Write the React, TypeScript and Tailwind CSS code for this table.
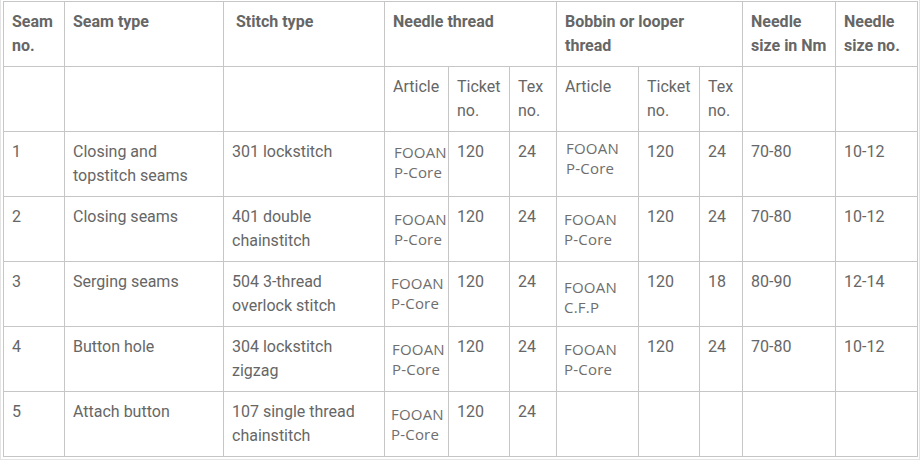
import React from "react";

type Art = { l1: string; l2: string; cls: string } | null;
type Row = {
  no: string;
  seam: string[];
  stitch: string[];
  nA: Art;
  nT: string;
  nX: string;
  bA: Art;
  bT: string;
  bX: string;
  nm: string;
  sz: string;
};

const rows: Row[] = [
  {
    no: "1",
    seam: ["Closing and", "topstitch seams"],
    stitch: ["301 lockstitch"],
    nA: { l1: "FOOAN", l2: "P-Core", cls: "mt-[2px] ml-[1px]" },
    nT: "120",
    nX: "24",
    bA: { l1: "FOOAN", l2: "P-Core", cls: "mt-[-2px] ml-[1px]" },
    bT: "120",
    bX: "24",
    nm: "70-80",
    sz: "10-12",
  },
  {
    no: "2",
    seam: ["Closing seams"],
    stitch: ["401 double", "chainstitch"],
    nA: { l1: "FOOAN", l2: "P-Core", cls: "mt-[4px] ml-[1px]" },
    nT: "120",
    nX: "24",
    bA: { l1: "FOOAN", l2: "P-Core", cls: "mt-[4px] ml-[-1px]" },
    bT: "120",
    bX: "24",
    nm: "70-80",
    sz: "10-12",
  },
  {
    no: "3",
    seam: ["Serging seams"],
    stitch: ["504 3-thread", "overlock stitch"],
    nA: { l1: "FOOAN", l2: "P-Core", cls: "mt-[3px] ml-[-2px]" },
    nT: "120",
    nX: "24",
    bA: { l1: "FOOAN", l2: "C.F.P", cls: "mt-[7px] ml-[-1px]" },
    bT: "120",
    bX: "18",
    nm: "80-90",
    sz: "12-14",
  },
  {
    no: "4",
    seam: ["Button hole"],
    stitch: ["304 lockstitch", "zigzag"],
    nA: { l1: "FOOAN", l2: "P-Core", cls: "mt-[4px] ml-[-1px]" },
    nT: "120",
    nX: "24",
    bA: { l1: "FOOAN", l2: "P-Core", cls: "mt-[4px] ml-[-1px]" },
    bT: "120",
    bX: "24",
    nm: "70-80",
    sz: "10-12",
  },
  {
    no: "5",
    seam: ["Attach button"],
    stitch: ["107 single thread", "chainstitch"],
    nA: { l1: "FOOAN", l2: "P-Core", cls: "mt-[4px] ml-[-2px]" },
    nT: "120",
    nX: "24",
    bA: null,
    bT: "",
    bX: "",
    nm: "",
    sz: "",
  },
];

const cell =
  "border border-[#c6c6c6] align-top px-[8px] py-[8px] text-left whitespace-nowrap overflow-hidden";
const th = cell + " font-bold";

function Lines({ lines }: { lines: string[] }) {
  return (
    <>
      {lines.map((l, i) => (
        <React.Fragment key={i}>
          {i > 0 && <br />}
          {l}
        </React.Fragment>
      ))}
    </>
  );
}

function ArtCell({ a }: { a: Art }) {
  return (
    <td className={cell + " px-[8px]"}>
      {a && (
        <div
          className={
            "font-['Open_Sans',sans-serif] text-[15px] leading-[20px] tracking-[0.2px] text-[#6e6e6e] " +
            a.cls
          }
        >
          {a.l1}
          <br />
          {a.l2}
        </div>
      )}
    </td>
  );
}

export default function App() {
  const widths = [61, 159, 161, 64, 61, 47, 82, 61, 43, 93, 82];
  return (
    <div className="w-[920px] h-[460px] bg-white border-l border-r border-b border-[#e4e4e4] overflow-hidden">
      <table className="ml-[2px] mt-[1px] w-[915px] table-fixed border-collapse font-['Roboto',sans-serif] text-[16px] leading-[24px] text-[#666666]">
        <colgroup>
          {widths.map((w, i) => (
            <col key={i} style={{ width: w }} />
          ))}
        </colgroup>
        <thead>
          <tr className="h-[65px]">
            <th className={th}>
              Seam
              <br />
              no.
            </th>
            <th className={th}>Seam type</th>
            <th className={th + " pl-[12px]"}>Stitch type</th>
            <th className={th} colSpan={3}>
              Needle thread
            </th>
            <th className={th} colSpan={3}>
              Bobbin or looper
              <br />
              thread
            </th>
            <th className={th}>
              Needle
              <br />
              size in Nm
            </th>
            <th className={th}>
              Needle
              <br />
              size no.
            </th>
          </tr>
          <tr className="h-[65px]">
            <td className={cell}></td>
            <td className={cell}></td>
            <td className={cell}></td>
            <td className={cell}>Article</td>
            <td className={cell}>
              Ticket
              <br />
              no.
            </td>
            <td className={cell}>
              Tex
              <br />
              no.
            </td>
            <td className={cell}>Article</td>
            <td className={cell}>
              Ticket
              <br />
              no.
            </td>
            <td className={cell}>
              Tex
              <br />
              no.
            </td>
            <td className={cell}></td>
            <td className={cell}></td>
          </tr>
        </thead>
        <tbody>
          {rows.map((r) => (
            <tr key={r.no} className="h-[65px]">
              <td className={cell}>{r.no}</td>
              <td className={cell}>
                <Lines lines={r.seam} />
              </td>
              <td className={cell}>
                <Lines lines={r.stitch} />
              </td>
              <ArtCell a={r.nA} />
              <td className={cell}>{r.nT}</td>
              <td className={cell}>{r.nX}</td>
              <ArtCell a={r.bA} />
              <td className={cell}>{r.bT}</td>
              <td className={cell}>{r.bX}</td>
              <td className={cell}>{r.nm}</td>
              <td className={cell}>{r.sz}</td>
            </tr>
          ))}
        </tbody>
      </table>
    </div>
  );
}
